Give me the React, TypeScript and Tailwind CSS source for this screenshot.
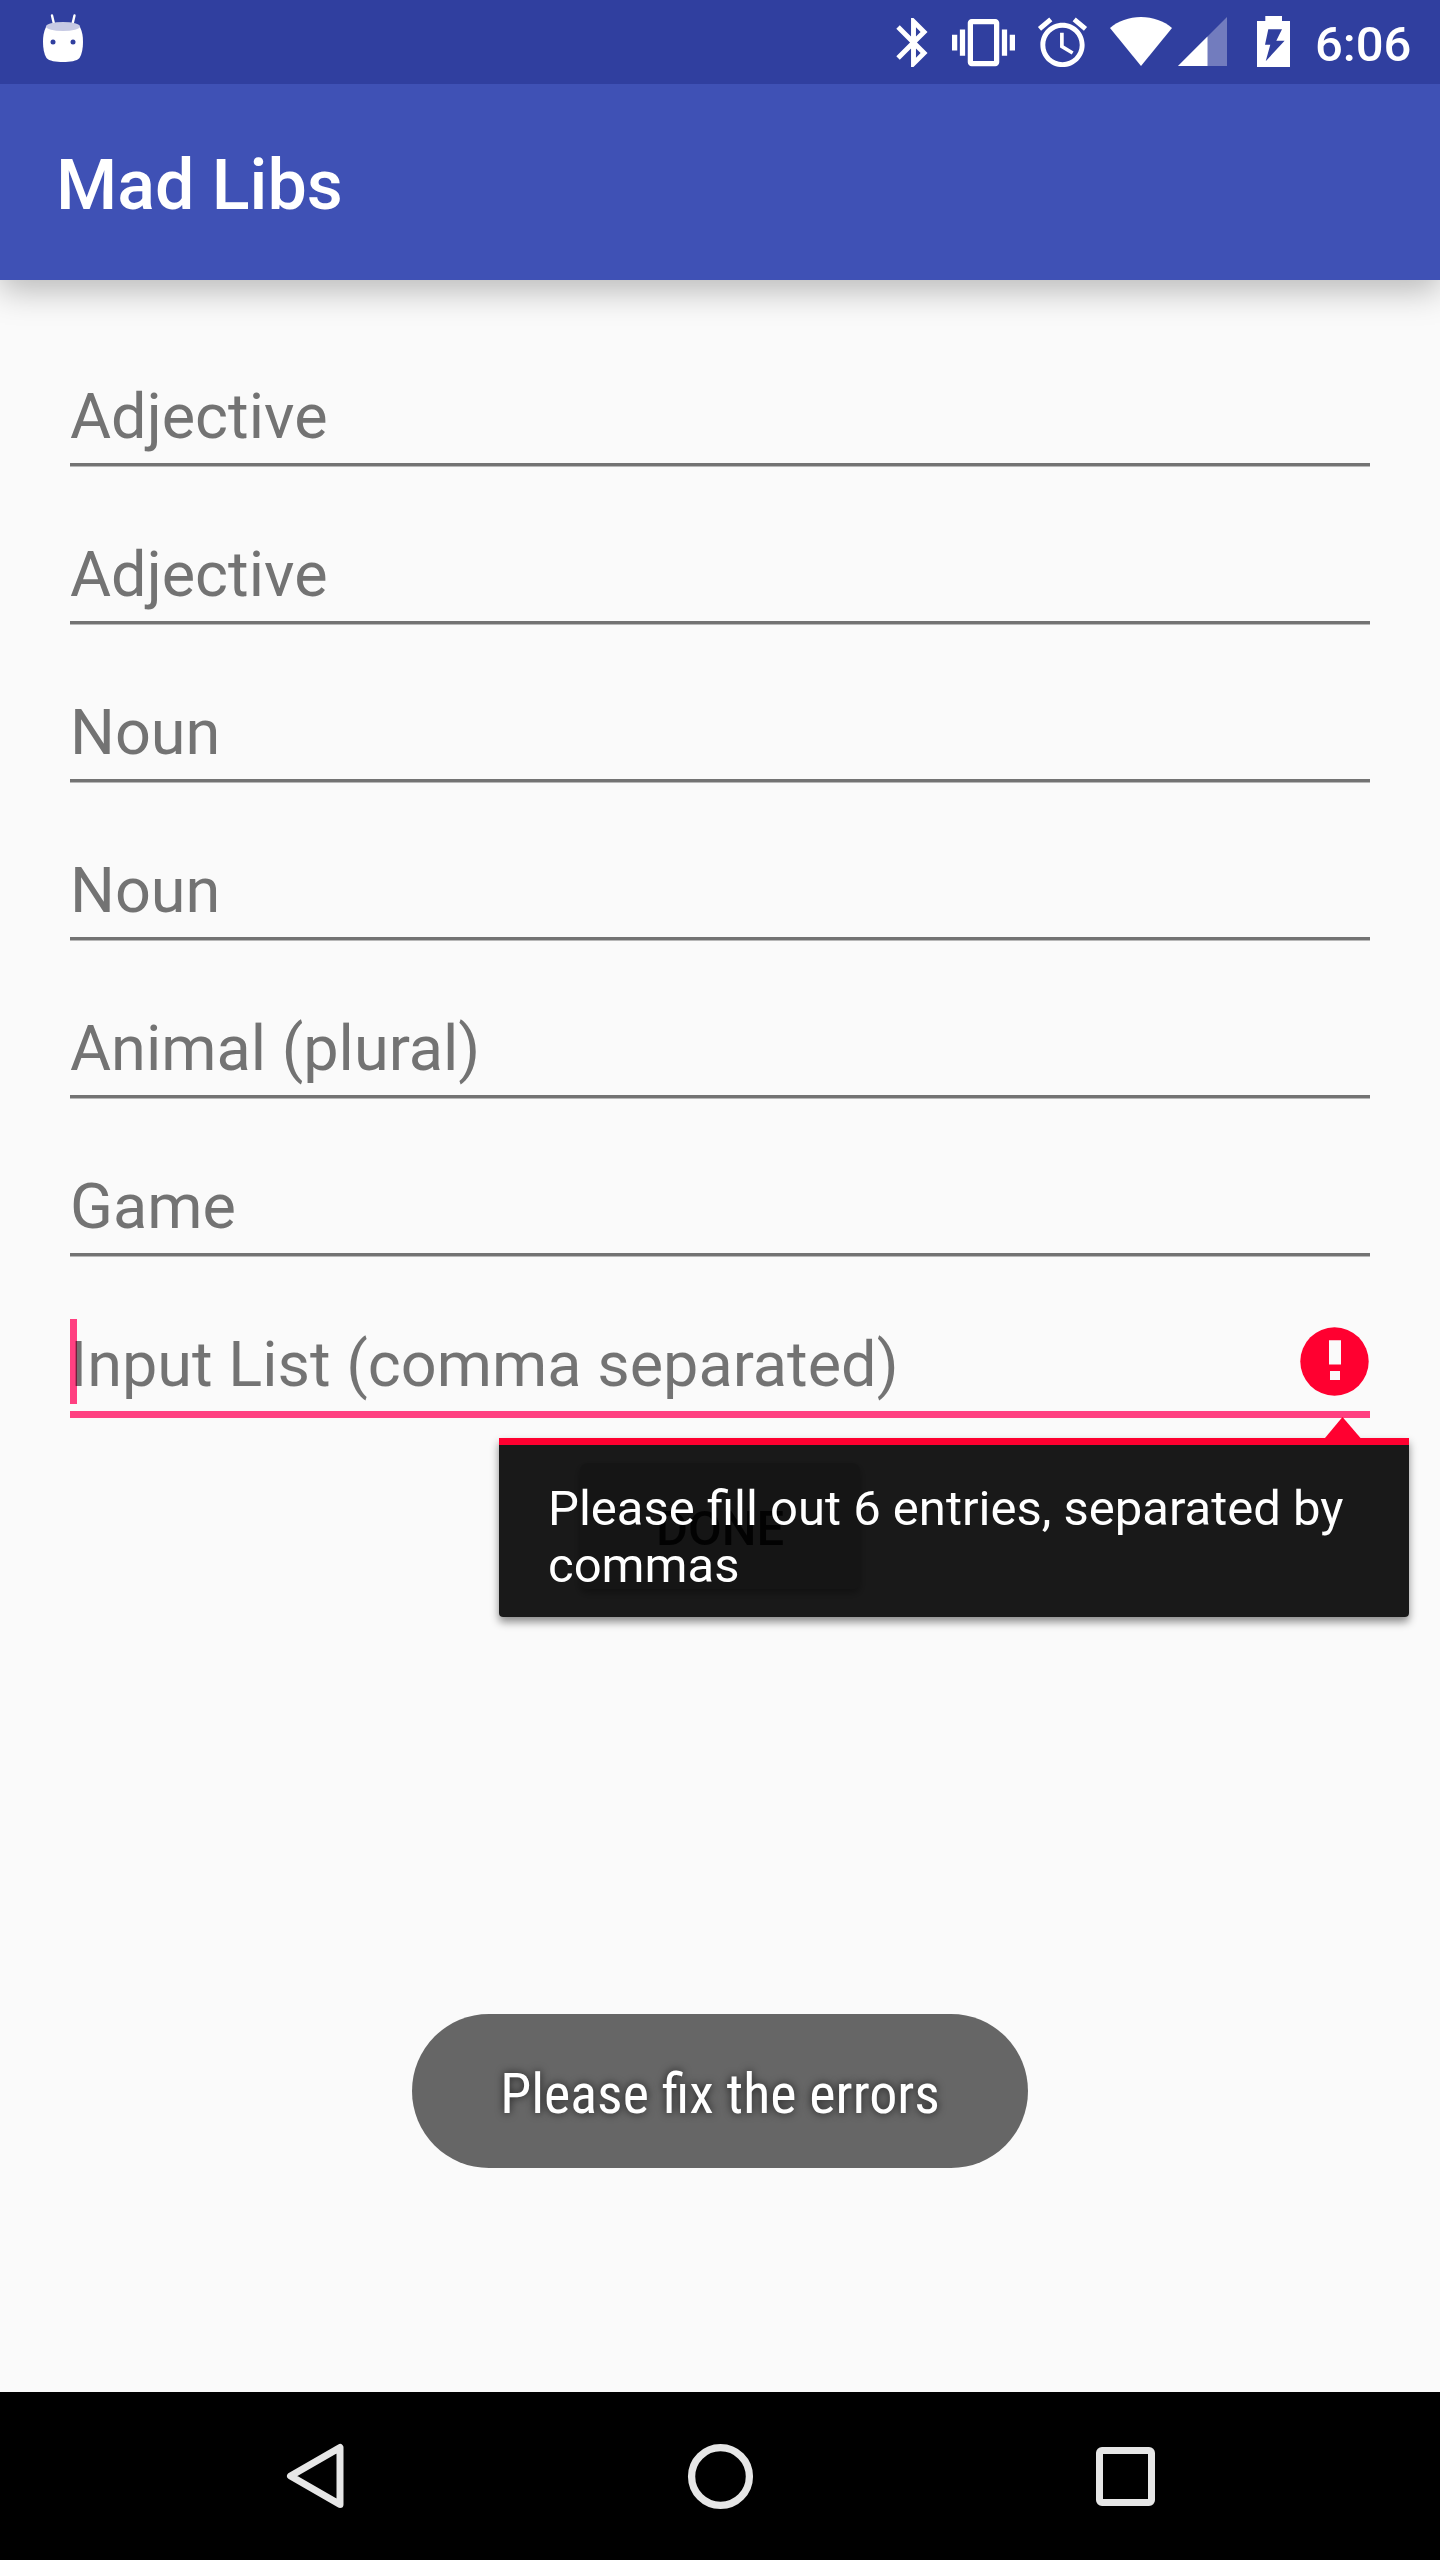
import type { ReactNode } from 'react';

const HINTS = ['Adjective', 'Adjective', 'Noun', 'Noun', 'Animal (plural)', 'Game'];

function StatusBar() {
  return (
    <div className="flex h-[84px] bg-[#303f9f] text-white">
      <svg className="ml-[42px] mt-[14px] h-[50px] w-[42px]" viewBox="42 14 42 50" fill="currentColor">
        <path d="M52 15.5L54 24M74.5 15.5L72.5 24" stroke="currentColor" strokeWidth="2.4" strokeLinecap="round" />
        <path d="M46 27C43.500 32 43 37 43 42C43 48 44 54 46.500 58C49 61 56 62 63 62C70 62 77 61 79.500 58C82 54 83 48 83 42C83 37 82.500 32 80 27Z" />
        <ellipse cx="63" cy="26.500" rx="17" ry="4.500" fill="#c7cae4" />
        <circle cx="53" cy="42" r="2.500" fill="#303f9f" />
        <circle cx="73" cy="42" r="2.500" fill="#303f9f" />
      </svg>
      <svg className="ml-[799.600px] mt-[13px] size-[59px]" viewBox="0 0 24 24" fill="currentColor">
        <path d="M17.710 7.710L12 2h-1v7.590L6.410 5 5 6.410 10.590 12 5 17.590 6.410 19 11 14.410V22h1l5.710-5.710-4.300-4.290 4.300-4.290zM13 5.830l1.880 1.880L13 9.590V5.830zm1.880 10.460L13 18.170v-3.760l1.880 1.880z" />
      </svg>
      <svg className="ml-[9.400px] mt-[11px] size-[63px]" viewBox="0 0 24 24" fill="currentColor">
        <path d="M0 15h2V9H0v6zm3 2h2V7H3v10zm19-8v6h2V9h-2zm-3 8h2V7h-2v10zM16.500 3h-9C6.670 3 6 3.670 6 4.500v15c0 .830.670 1.500 1.500 1.500h9c.830 0 1.500-.670 1.500-1.500v-15c0-.830-.670-1.500-1.500-1.500zM16 19H8V5h8v14z" />
      </svg>
      <svg className="ml-[18px] mt-[13px] size-[59px]" viewBox="0 0 24 24" fill="currentColor">
        <path d="M22 5.720l-4.600-3.860-1.290 1.530 4.600 3.860L22 5.720zM7.880 3.390L6.600 1.860 2 5.710l1.290 1.530 4.590-3.850zM12.500 8H11v6l4.750 2.850.750-1.230-4-2.370V8zM12 4c-4.970 0-9 4.030-9 9s4.020 9 9 9c4.970 0 9-4.030 9-9s-4.030-9-9-9zm0 16c-3.870 0-7-3.130-7-7s3.130-7 7-7 7 3.130 7 7-3.130 7-7 7z" />
      </svg>
      <svg className="ml-[18px] mt-[17px] h-[49px] w-[62px]" viewBox="0 0 62 49" fill="currentColor">
        <path d="M31 49L0 11C8 4 19 0 31 0S54 4 62 11Z" />
      </svg>
      <svg className="ml-[6px] mt-[17px] size-[49px]" viewBox="0 0 49 49" fill="currentColor">
        <path d="M0 49L49 0V49Z" fillOpacity="0.32" />
        <path d="M0 49L29.500 19.500V49Z" />
      </svg>
      <svg className="ml-[30px] mt-[16px] h-[51px] w-[33px]" viewBox="0 0 33 51" fill="currentColor">
        <path
          fillRule="evenodd"
          d="M8.300 0H25V5H33V51H0V5H8.300ZM11.300 13.300L8 28.700H13.300L8.700 45.300L27.600 24.700H19.300L25 13.300Z"
        />
      </svg>
      <span className="ml-[25px] mt-[16px] text-[49px] leading-[57px] font-medium">6:06</span>
    </div>
  );
}

function Field({ children }: { children: ReactNode }) {
  return (
    <div className="flex h-[158px] flex-col">
      <span className="mt-[64px] h-[74px] text-[63px] leading-[74px] text-[#737373]">{children}</span>
      <div className="mt-[9px] h-[4px] border-b border-[#b8b8b8] bg-[#737373]" />
    </div>
  );
}

function ErrorPopup() {
  return (
    <div className="absolute top-[107px] left-[429px] z-10 w-[910px]">
      <div className="h-[179px] rounded-b-[4px] border-t-[7px] border-[#ff0030] bg-black/90 pt-[35px] pl-[49px] text-[49px] leading-[57px] text-white shadow-[0_5px_9px_rgba(0,0,0,0.450)]">
        Please fill out 6 entries, separated by
        <br />
        commas
      </div>
      <svg className="absolute -top-[21px] left-[826px] h-[22px] w-[36px]" viewBox="0 0 36 22" fill="#ff0030">
        <path d="M0 22V21L17.500 0L35.500 21V22Z" />
      </svg>
    </div>
  );
}

function FocusedField() {
  return (
    <div className="relative h-[87px]">
      <div className="absolute -top-[12px] left-0 h-[85px] w-[7px] bg-[#ff4081]" />
      <div className="relative flex h-[80px] justify-between">
        <span className="-mt-[3px] h-[74px] text-[63px] leading-[74px] text-black/54">Input List (comma separated)</span>
        <svg className="mt-[-4.300px] mr-[1px] size-[69px]" viewBox="0 0 69 69">
          <circle cx="34.500" cy="34.500" r="34.200" fill="#ff0030" />
          <path d="M29 13.300H41V37.500H29ZM30 44H40V53H30Z" fill="#fafafa" />
        </svg>
      </div>
      <div className="h-[7px] bg-[#ff4081]" />
      <ErrorPopup />
    </div>
  );
}

export default function App() {
  return (
    <div className="flex h-[2560px] w-[1440px] flex-col overflow-hidden bg-[#fafafa] font-['Roboto',sans-serif]">
      <StatusBar />
      <header className="flex h-[196px] items-center bg-[#3f51b5] pl-[56px] text-[70px] leading-[82px] font-medium text-white shadow-[0_10px_32px_rgba(0,0,0,0.270)] [clip-path:inset(0_0_-60px_0)]">
        <h1 className="mt-[6px]">Mad Libs</h1>
      </header>
      <main className="flex grow flex-col px-[70px] pt-[36px]">
        {HINTS.map((hint, i) => (
          <Field key={i}>{hint}</Field>
        ))}
        <div className="mt-[67px]">
          <FocusedField />
        </div>
        <button className="mt-[45px] h-[126px] w-[280px] shrink-0 self-center rounded-[7px] bg-[#d6d7d7] pt-[5px] text-[49px] leading-[57px] font-medium text-black/87 shadow-[0_4px_7px_rgba(0,0,0,0.300)]">
          DONE
        </button>
        <div className="mt-[425px] flex h-[154px] w-[616px] shrink-0 items-center justify-center self-center rounded-full bg-[#666666] pt-[6px] text-white">
          <span className="text-[56px] leading-[66px] whitespace-nowrap [font-stretch:75%] [text-shadow:0_0_9px_rgba(0,0,0,0.730)]">
            Please fix the errors
          </span>
        </div>
      </main>
      <nav className="flex h-[168px] shrink-0 items-center bg-black pl-[286px] text-[#e6e6e6]">
        <svg className="h-[66px] w-[58px]" viewBox="0 0 58 66" fill="none" stroke="currentColor" strokeWidth="7" strokeLinejoin="round">
          <path d="M54 4.500V61.500L4.500 33Z" />
        </svg>
        <svg className="ml-[343px] size-[67px]" viewBox="0 0 67 67" fill="none" stroke="currentColor" strokeWidth="7.300">
          <circle cx="33.500" cy="33.500" r="28.900" />
        </svg>
        <div className="ml-[342px] size-[59px] rounded-[6px] border-[7px] border-[#e6e6e6]" />
      </nav>
    </div>
  );
}
